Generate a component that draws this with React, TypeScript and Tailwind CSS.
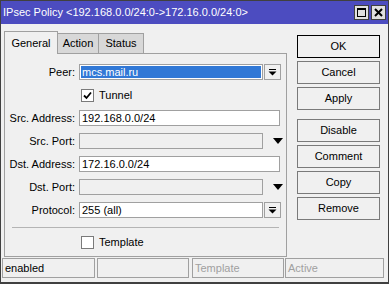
import React from "react";

const DropIcon = () => (
  <svg width="9" height="9" viewBox="0 0 9 9">
    <rect x="1" y="1" width="7" height="1" fill="#000" />
    <polygon points="0.5,3.5 8.5,3.5 4.5,7.5" fill="#000" />
  </svg>
);

const Arrow = () => (
  <svg width="10" height="6" viewBox="0 0 10 6">
    <polygon points="0,0 10,0 5,6" fill="#000" />
  </svg>
);

const Label = ({ children }: { children: React.ReactNode }) => (
  <div className="w-[71px] shrink-0 text-right pr-[1px] leading-[16px] whitespace-nowrap">{children}</div>
);

const Row = ({ children }: { children: React.ReactNode }) => (
  <div className="flex items-center h-[16px] gap-[2px]">{children}</div>
);

const Btn = ({ children, def }: { children: React.ReactNode; def?: boolean }) => (
  <div
    className={
      "h-[23px] w-[83px] flex items-center justify-center bg-[#f0f0f0] border " +
      (def ? "border-black" : "border-[#7a7a7a]")
    }
  >
    {children}
  </div>
);

const Check = ({ checked }: { checked?: boolean }) => (
  <div className="w-[13px] h-[13px] bg-white border border-[#7a7a7a] flex items-center justify-center">
    {checked && (
      <svg width="9" height="9" viewBox="0 0 9 9">
        <path d="M1 4.5 L3.5 7 L8 1.5" stroke="#000" strokeWidth="1.8" fill="none" />
      </svg>
    )}
  </div>
);

export default function App() {
  return (
    <div className="w-[389px] h-[284px] bg-[#f0f0f0] border border-[#404040] border-b-2 flex flex-col font-['Liberation_Sans',sans-serif] text-[11px] text-black overflow-hidden">
      {/* Title bar */}
      <div className="h-[23px] shrink-0 bg-[#4c4cc0] flex items-center justify-between pl-[2px] pr-[2px]">
        <span className="text-white leading-none whitespace-nowrap">IPsec Policy &lt;192.168.0.0/24:0-&gt;172.16.0.0/24:0&gt;</span>
        <div className="flex gap-[2px]">
          <div className="w-[15px] h-[15px] bg-[#e0e0e0] border border-[#404040] flex items-center justify-center">
            <div className="w-[9px] h-[9px] border border-black border-t-2" />
          </div>
          <div className="w-[15px] h-[15px] bg-[#e0e0e0] border border-[#404040] flex items-center justify-center">
            <svg width="9" height="9" viewBox="0 0 9 9">
              <path d="M1 1 L8 8 M8 1 L1 8" stroke="#000" strokeWidth="2" />
            </svg>
          </div>
        </div>
      </div>

      {/* Body */}
      <div className="flex h-[233px] shrink-0">
        <div className="ml-[3px] mt-[7px] w-[283px] flex flex-col">
          <div className="h-[22px] flex items-end">
            <div className="h-[23px] w-[54px] border border-b-0 border-[#a0a0a0] bg-[#f0f0f0] flex items-center justify-center relative top-[1px] z-10">
              General
            </div>
            <div className="h-[20px] w-[41px] border border-b-0 border-l-0 border-[#a0a0a0] bg-[#d8d8d8] flex items-center justify-center">
              Action
            </div>
            <div className="h-[20px] w-[45px] border border-b-0 border-l-0 border-[#a0a0a0] bg-[#d8d8d8] flex items-center justify-center">
              Status
            </div>
          </div>
          <div className="h-[204px] border border-[#a0a0a0] pt-[10px] flex flex-col">
            <div className="flex flex-col gap-[7px]">
              <Row>
                <Label>Peer:</Label>
                <div className="w-[184px] h-[16px] border border-[#a0a0a0] bg-white p-[1px] ml-[1px]">
                  <div className="h-full bg-[#3178d6] text-white px-[1px] leading-[12px]">mcs.mail.ru</div>
                </div>
                <div className="w-[17px] h-[16px] border border-[#a0a0a0] bg-[#f0f0f0] flex items-center justify-center -ml-[1px]">
                  <DropIcon />
                </div>
              </Row>
              <Row>
                <div className="w-[73px]" />
                <div className="ml-[1px]"><Check checked /></div>
                <span className="ml-[3px]">Tunnel</span>
              </Row>
              <Row>
                <Label>Src. Address:</Label>
                <div className="w-[201px] h-[16px] border border-[#a0a0a0] bg-white px-[2px] leading-[14px] ml-[1px]">
                  192.168.0.0/24
                </div>
              </Row>
              <Row>
                <Label>Src. Port:</Label>
                <div className="w-[184px] h-[16px] border border-[#a0a0a0] bg-[#f0f0f0] ml-[1px]" />
                <div className="w-[17px] flex items-center justify-center ml-[4px]">
                  <Arrow />
                </div>
              </Row>
              <Row>
                <Label>Dst. Address:</Label>
                <div className="w-[201px] h-[16px] border border-[#a0a0a0] bg-white px-[2px] leading-[14px] ml-[1px]">
                  172.16.0.0/24
                </div>
              </Row>
              <Row>
                <Label>Dst. Port:</Label>
                <div className="w-[184px] h-[16px] border border-[#a0a0a0] bg-[#f0f0f0] ml-[1px]" />
                <div className="w-[17px] flex items-center justify-center ml-[4px]">
                  <Arrow />
                </div>
              </Row>
              <Row>
                <Label>Protocol:</Label>
                <div className="w-[184px] h-[16px] border border-[#a0a0a0] bg-white px-[2px] leading-[14px] ml-[1px]">
                  255 (all)
                </div>
                <div className="w-[17px] h-[16px] border border-[#a0a0a0] bg-[#f0f0f0] flex items-center justify-center -ml-[1px]">
                  <DropIcon />
                </div>
              </Row>
            </div>
            <div className="mt-[9px] ml-[7px] w-[267px] h-px bg-[#b4b4b4]" />
            <div className="mt-[6px]">
              <Row>
                <div className="w-[73px]" />
                <div className="ml-[1px]"><Check /></div>
                <span className="ml-[3px]">Template</span>
              </Row>
            </div>
          </div>
        </div>

        <div className="ml-[10px] mt-[11px] flex flex-col gap-[3px]">
          <Btn def>OK</Btn>
          <Btn>Cancel</Btn>
          <Btn>Apply</Btn>
          <div className="mt-[6px] flex flex-col gap-[3px]">
            <Btn>Disable</Btn>
            <Btn>Comment</Btn>
            <Btn>Copy</Btn>
            <Btn>Remove</Btn>
          </div>
        </div>
      </div>

      {/* Status bar */}
      <div className="mt-[1px] h-[20px] flex shrink-0">
        <div className="ml-[1px] w-[93px] border border-[#a0a0a0] px-[2px] leading-[18px]">enabled</div>
        <div className="ml-[2px] w-[92px] border border-[#a0a0a0]" />
        <div className="ml-[3px] w-[92px] border border-[#a0a0a0] px-[2px] leading-[18px] text-[#a0a0a0]">Template</div>
        <div className="ml-[1px] w-[99px] border border-[#a0a0a0] px-[2px] leading-[18px] text-[#a0a0a0]">Active</div>
      </div>
    </div>
  );
}
